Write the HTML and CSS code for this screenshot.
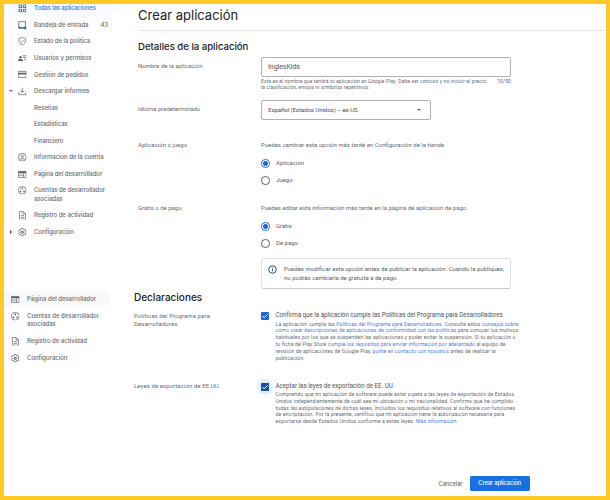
FILE: index.html
```
<!DOCTYPE html>
<html lang="es">
<head>
<meta charset="utf-8">
<title>Crear aplicación</title>
<link rel="stylesheet" href="styles.css">
</head>
<body>
<svg class="defs" width="0" height="0">
  <symbol id="apps" viewBox="0 0 24 24"><g fill="none" stroke="currentColor" stroke-width="3"><rect x="3" y="3" width="7" height="7" rx="1"/><rect x="15" y="3" width="7" height="7" rx="1"/><rect x="3" y="15" width="7" height="7" rx="1"/><rect x="15" y="15" width="7" height="7" rx="1"/></g></symbol>
  <symbol id="inbox" viewBox="0 0 24 24"><path fill="none" stroke="currentColor" stroke-width="2.300" d="M2 2h19v18H2z"/><path fill="currentColor" d="M2 16h6l2 2h4l2-2h5v5H2z"/><circle cx="21" cy="21" r="4" fill="#1a73e8"/></symbol>
  <symbol id="shield" viewBox="0 0 24 24"><path fill="none" stroke="currentColor" stroke-width="2" d="M12 1l9 3.500v7c0 5-4 9.500-9 11-5-1.500-9-6-9-11v-7zM7.500 12l3.500 3 6-6"/></symbol>
  <symbol id="users" viewBox="0 0 24 24"><path fill="currentColor" d="M0 20v-2c0-3 4-4 7-4s7 1 7 4v2z"/><circle cx="7" cy="9" r="3.500" fill="currentColor"/><path fill="none" stroke="currentColor" stroke-width="2" d="M13 5h11M14 10h10M17 15h7"/></symbol>
  <symbol id="card" viewBox="0 0 24 24"><path fill="none" stroke="currentColor" stroke-width="2" d="M1 4h22v17H1z"/><path fill="currentColor" d="M1 8h22v5H1z"/></symbol>
  <symbol id="download" viewBox="0 0 24 24"><path fill="none" stroke="currentColor" stroke-width="2.300" d="M12 2v13M7 10.500l5 5 5-5M2 15v7h20v-7"/></symbol>
  <symbol id="account" viewBox="0 0 24 24"><g fill="none" stroke="currentColor" stroke-width="2"><circle cx="12" cy="12" r="11"/><circle cx="12" cy="9.500" r="3.500"/><path d="M5 19.500c3-4.500 11-4.500 14 0"/></g></symbol>
  <symbol id="web" viewBox="0 0 24 24"><path fill="none" stroke="currentColor" stroke-width="2" d="M1 4h22v17H1zM1 14.500h15M16 9v12"/><path fill="currentColor" d="M1 4h22v5H1z"/></symbol>
  <symbol id="linked" viewBox="0 0 24 24"><circle cx="12" cy="12" r="11" fill="none" stroke="currentColor" stroke-width="2"/><g fill="currentColor"><circle cx="12" cy="7" r="2.500"/><circle cx="7" cy="15" r="2.500"/><circle cx="17" cy="15" r="2.500"/></g></symbol>
  <symbol id="doc" viewBox="0 0 24 24"><path fill="none" stroke="currentColor" stroke-width="2" d="M4 1h10l7 7v15H4zM14 1v7h7M8 13h9M8 18h9"/></symbol>
  <symbol id="gear" viewBox="0 0 24 24"><path fill="none" stroke="currentColor" stroke-width="2.200" stroke-linejoin="round" d="M9.500 1h5l.6 3 2 1.200 3-1 2.400 4.300-2.300 2v2.500l2.300 2-2.400 4.300-3-1-2 1.200-.6 3h-5l-.6-3-2-1.200-3 1L1.500 15l2.300-2v-2.500l-2.300-2 2.400-4.300 3 1 2-1.200z"/><circle cx="12" cy="12" r="3" fill="none" stroke="currentColor" stroke-width="3"/></symbol>
</svg>
<div class="frame">
  <aside class="sidebar">
    <nav class="nav">
      <a class="item active"><i class="caret"></i><svg><use href="#apps"/></svg><span>Todas las aplicaciones</span></a>
      <a class="item"><i class="caret"></i><svg><use href="#inbox"/></svg><span>Bandeja de entrada</span><b class="count">43</b></a>
      <a class="item"><i class="caret"></i><svg><use href="#shield"/></svg><span>Estado de la política</span></a>
      <a class="item"><i class="caret"></i><svg><use href="#users"/></svg><span>Usuarios y permisos</span></a>
      <a class="item"><i class="caret"></i><svg><use href="#card"/></svg><span>Gestión de pedidos</span></a>
      <a class="item"><i class="caret down"></i><svg><use href="#download"/></svg><span>Descargar informes</span></a>
      <a class="item"><i class="caret"></i><svg></svg><span>Reseñas</span></a>
      <a class="item"><i class="caret"></i><svg></svg><span>Estadísticas</span></a>
      <a class="item"><i class="caret"></i><svg></svg><span>Financiero</span></a>
      <a class="item"><i class="caret"></i><svg><use href="#account"/></svg><span>Información de la cuenta</span></a>
      <a class="item"><i class="caret"></i><svg><use href="#web"/></svg><span>Página del desarrollador</span></a>
      <a class="item double"><i class="caret"></i><svg><use href="#linked"/></svg><span>Cuentas de desarrollador<br>asociadas</span></a>
      <a class="item"><i class="caret"></i><svg><use href="#doc"/></svg><span>Registro de actividad</span></a>
      <a class="item"><i class="caret right"></i><svg><use href="#gear"/></svg><span>Configuración</span></a>
    </nav>
    <nav class="nav secondary">
      <a class="item selected"><svg><use href="#web"/></svg><span>Página del desarrollador</span></a>
      <a class="item double"><svg><use href="#linked"/></svg><span>Cuentas de desarrollador<br>asociadas</span></a>
      <a class="item"><svg><use href="#doc"/></svg><span>Registro de actividad</span></a>
      <a class="item"><svg><use href="#gear"/></svg><span>Configuración</span></a>
    </nav>
  </aside>
  <main class="main">
    <section class="details">
      <h1>Crear aplicación</h1>
      <h2>Detalles de la aplicación</h2>
      <div class="row name-row">
        <div class="label">Nombre de la aplicación</div>
        <div>
          <div class="input">InglesKids</div>
          <div class="helper"><span>Este es el nombre que tendrá tu aplicación en Google Play. Debe ser conciso y no incluir el precio,<br>la clasificación, emojis ni símbolos repetitivos.</span><span>10/50</span></div>
        </div>
      </div>
      <div class="row lang-row">
        <div class="label">Idioma predeterminado</div>
        <div class="select"><span>Español (Estados Unidos) – es-US</span><i class="caret down"></i></div>
      </div>
      <div class="row choice-row">
        <div class="label">Aplicación o juego</div>
        <div>
          <div class="hint">Puedes cambiar esta opción más tarde en Configuración de la tienda</div>
          <div class="radio on"><i></i>Aplicación</div>
          <div class="radio"><i></i>Juego</div>
        </div>
      </div>
      <div class="row price-row">
        <div class="label">Gratis o de pago</div>
        <div>
          <div class="hint">Puedes editar esta información más tarde en la página de aplicación de pago</div>
          <div class="radio on"><i></i>Gratis</div>
          <div class="radio"><i></i>De pago</div>
          <div class="notice">
            <svg viewBox="0 0 24 24"><circle cx="12" cy="12" r="10" fill="none" stroke="currentColor" stroke-width="2.500"/><path stroke="currentColor" stroke-width="2.500" d="M12 11v6M12 6.500v2.500"/></svg>
            <p>Puedes modificar esta opción antes de publicar la aplicación. Cuando la publiques,<br>no podrás cambiarla de gratuita a de pago.</p>
          </div>
        </div>
      </div>
    </section>
    <section class="declarations">
      <h2>Declaraciones</h2>
      <div class="row policy-row">
        <div class="label">Políticas del Programa para<br>Desarrolladores</div>
        <div class="check">
          <svg class="box" viewBox="0 0 24 24"><path d="M4 12l5.500 5.500L20 7"/></svg>
          <div>
            <div class="check-title">Confirma que la aplicación cumple las Políticas del Programa para Desarrolladores</div>
            <p>La aplicación cumple las <a>Políticas del Programa para Desarrolladores</a>. Consulta estos <a>consejos sobre<br>cómo crear descripciones de aplicaciones de conformidad con las políticas</a> para conocer los motivos<br>habituales por los que se suspenden las aplicaciones y poder evitar la suspensión. Si tu aplicación o<br>tu ficha de Play Store <a>cumple los requisitos para enviar información por adelantado</a> al equipo de<br>revisión de aplicaciones de Google Play, <a>ponte en contacto con nosotros</a> antes de realizar la<br>publicación.</p>
          </div>
        </div>
      </div>
      <div class="row export-row">
        <div class="label">Leyes de exportación de EE.UU.</div>
        <div class="check">
          <svg class="box focused" viewBox="0 0 24 24"><path d="M4 12l5.500 5.500L20 7"/></svg>
          <div>
            <div class="check-title">Aceptar las leyes de exportación de EE. UU.</div>
            <p>Comprendo que mi aplicación de software puede estar sujeta a las leyes de exportación de Estados<br>Unidos independientemente de cuál sea mi ubicación o mi nacionalidad. Confirmo que he cumplido<br>todas las estipulaciones de dichas leyes, incluidos los requisitos relativos al software con funciones<br>de encriptación. Por la presente, certifico que mi aplicación tiene la autorización necesaria para<br>exportarse desde Estados Unidos conforme a estas leyes. <a>Más información</a></p>
          </div>
        </div>
      </div>
    </section>
    <footer><a class="cancel">Cancelar</a><a class="submit">Crear aplicación</a></footer>
  </main>
</div>
</body>
</html>
```
FILE: styles.css
```
* { box-sizing: border-box; }
body { margin: 0; font-family: Roboto, sans-serif; color: #686c70; background: #fff; }
h1, h2, p { margin: 0; }
.defs { display: block; height: 0; }
.frame { display: flex; width: 610px; height: 500px; border: 4px solid #ffca28; overflow: hidden; background: #fff; }
.sidebar { width: 130px; flex: none; }
.nav { height: 290px; margin-top: -4px; font: 500 6px/8.3px Inter, sans-serif; color: #686c70; letter-spacing: -.06px; }
.item { display: flex; height: 16.55px; padding: 4.4px 0 0 4px; white-space: nowrap; }
.item.double { height: 25px; }
.item > svg { width: 8.500px; height: 8.500px; flex: none; margin: -.2px 7.500px 0 0; color: #5c6064; overflow: visible; }
.item .caret { width: 10px; margin-right: 0; }
.item.active { width: 106px; margin-left: 4px; padding-left: 0; background: #f8fafe; color: #3b76d8; letter-spacing: -.14px; border-radius: 0 8px 8px 0; }
.item.active > svg { color: #3b76d8; }
.count { margin-left: auto; margin-right: 26px; font-weight: 500; }
.caret { display: flex; flex: none; align-items: center; height: 8px; }
.caret.down::before { content: ""; border: 2px solid transparent; border-top: 2.500px solid #5f6368; border-bottom: 0; }
.item .caret.down { padding-left: .5px; }
.item .caret.right { padding-left: 1.5px; }
.caret.right::before { content: ""; border: 2px solid transparent; border-left: 2.500px solid #3c4043; border-right: 0; }
.secondary { height: auto; margin-top: .5px; letter-spacing: -.02px; }
.secondary .item { height: 16.8px; padding-left: 7px; }
.secondary .item.double { height: 25.500px; }
.secondary .selected { width: 106px; background: #f8f9fb; border-radius: 0 8px 8px 0; }
.main { width: 472px; height: 492px; flex: none; display: flex; flex-direction: column; }
.details { height: 285px; padding-left: 4px; }
h1 { height: 27px; padding-top: 3px; border-bottom: 1px solid #e3e5e8; font: 400 13px/17px Inter, sans-serif; color: #202124; white-space: nowrap; }
h2 { font: 500 10px/14px Inter, sans-serif; color: #202124; white-space: nowrap; }
.details h2 { height: 26px; padding-top: 9px; font-size: 9.600px; letter-spacing: -.02px; }
.declarations h2 { height: 22px; padding-top: .5px; }
.row { display: grid; grid-template-columns: 123px 250px; font-size: 6px; line-height: 8.3px; white-space: nowrap; }
.name-row { height: 42.500px; }
.name-row .label { padding-top: 5px; }
.input, .select { height: 20px; padding: 0 6px; border: 1px solid #aeb2b5; border-radius: 2px; display: flex; align-items: center; color: #505458; font-size: 7px; }
.input { letter-spacing: -.05px; }
.helper { display: flex; justify-content: space-between; padding-top: .8px; font-size: 5px; line-height: 6.200px; letter-spacing: .11px; }
.lang-row { height: 41px; }
.lang-row .label { padding-top: 5.500px; }
.select { width: 170px; justify-content: space-between; padding-top: 1px; padding-right: 9.500px; font-size: 6.200px; letter-spacing: -.13px; }
.choice-row { height: 63px; }
.choice-row, .price-row { padding-top: .8px; }
.hint { height: 13.900px; }
.radio { display: flex; align-items: center; height: 16.900px; color: #5c6064; }
.radio i { width: 8.500px; height: 8.500px; margin-right: 6.500px; border: 1px solid #5f6368; border-radius: 50%; }
.radio.on i { border-color: #1a73e8; background: radial-gradient(circle, #1a67d0 2.100px, #fff 2.700px); }
.notice { display: flex; height: 31px; margin-top: 6px; padding: 6.500px 0 0 6px; border: 1px solid #dfe1e4; border-bottom-color: #c7c9cc; border-radius: 3px; color: #5c6064; }
.notice svg { width: 9px; height: 9px; margin: 0 7px 0 0; color: #174a7c; flex: none; }
.declarations { height: 184px; }
.declarations .row { grid-template-columns: 127px 250px; }
.declarations .label { letter-spacing: .08px; }
.policy-row { height: 70.500px; }
.policy-row .label { padding-top: 1px; }
.export-row .label { padding-top: .5px; }
.check { display: flex; }
.box { width: 8px; height: 8px; flex: none; margin: 1px 6.500px 0 0; background: #1a67d8; border-radius: 1px; }
.box path { fill: none; stroke: #fff; stroke-width: 3; }
.box.focused { background: #174ea6; outline: 4px solid #e4eefc; border-radius: 5px; border-radius: 1px; }
.export-row .box { outline: 0; background: radial-gradient(circle, #174ea6 100%, #174ea6); width: 16px; height: 16px; padding: 4px; margin: -3px 2.500px 0 -4px; border-radius: 50%; background: linear-gradient(#174ea6, #174ea6) center / 8px 8px no-repeat #e4eefc; }
.check-title { font-size: 6.300px; line-height: 9px; color: #505458; letter-spacing: -.05px; }
.check p { font-size: 5.200px; line-height: 6.800px; padding-top: .6px; letter-spacing: .1px; }
.check a { color: #4a80e0; }
footer { display: flex; justify-content: flex-end; align-items: center; gap: 7px; padding-right: 76px; margin-top: 3px; height: 15px; font: 500 6px/15px Inter, sans-serif; }
.cancel { font-size: 5.700px; letter-spacing: -.05px; }
.submit { width: 60.500px; height: 15px; background: #1a6fe0; color: #fff; border-radius: 1.5px; text-align: center; font-size: 5.600px; letter-spacing: -.05px; }
```
